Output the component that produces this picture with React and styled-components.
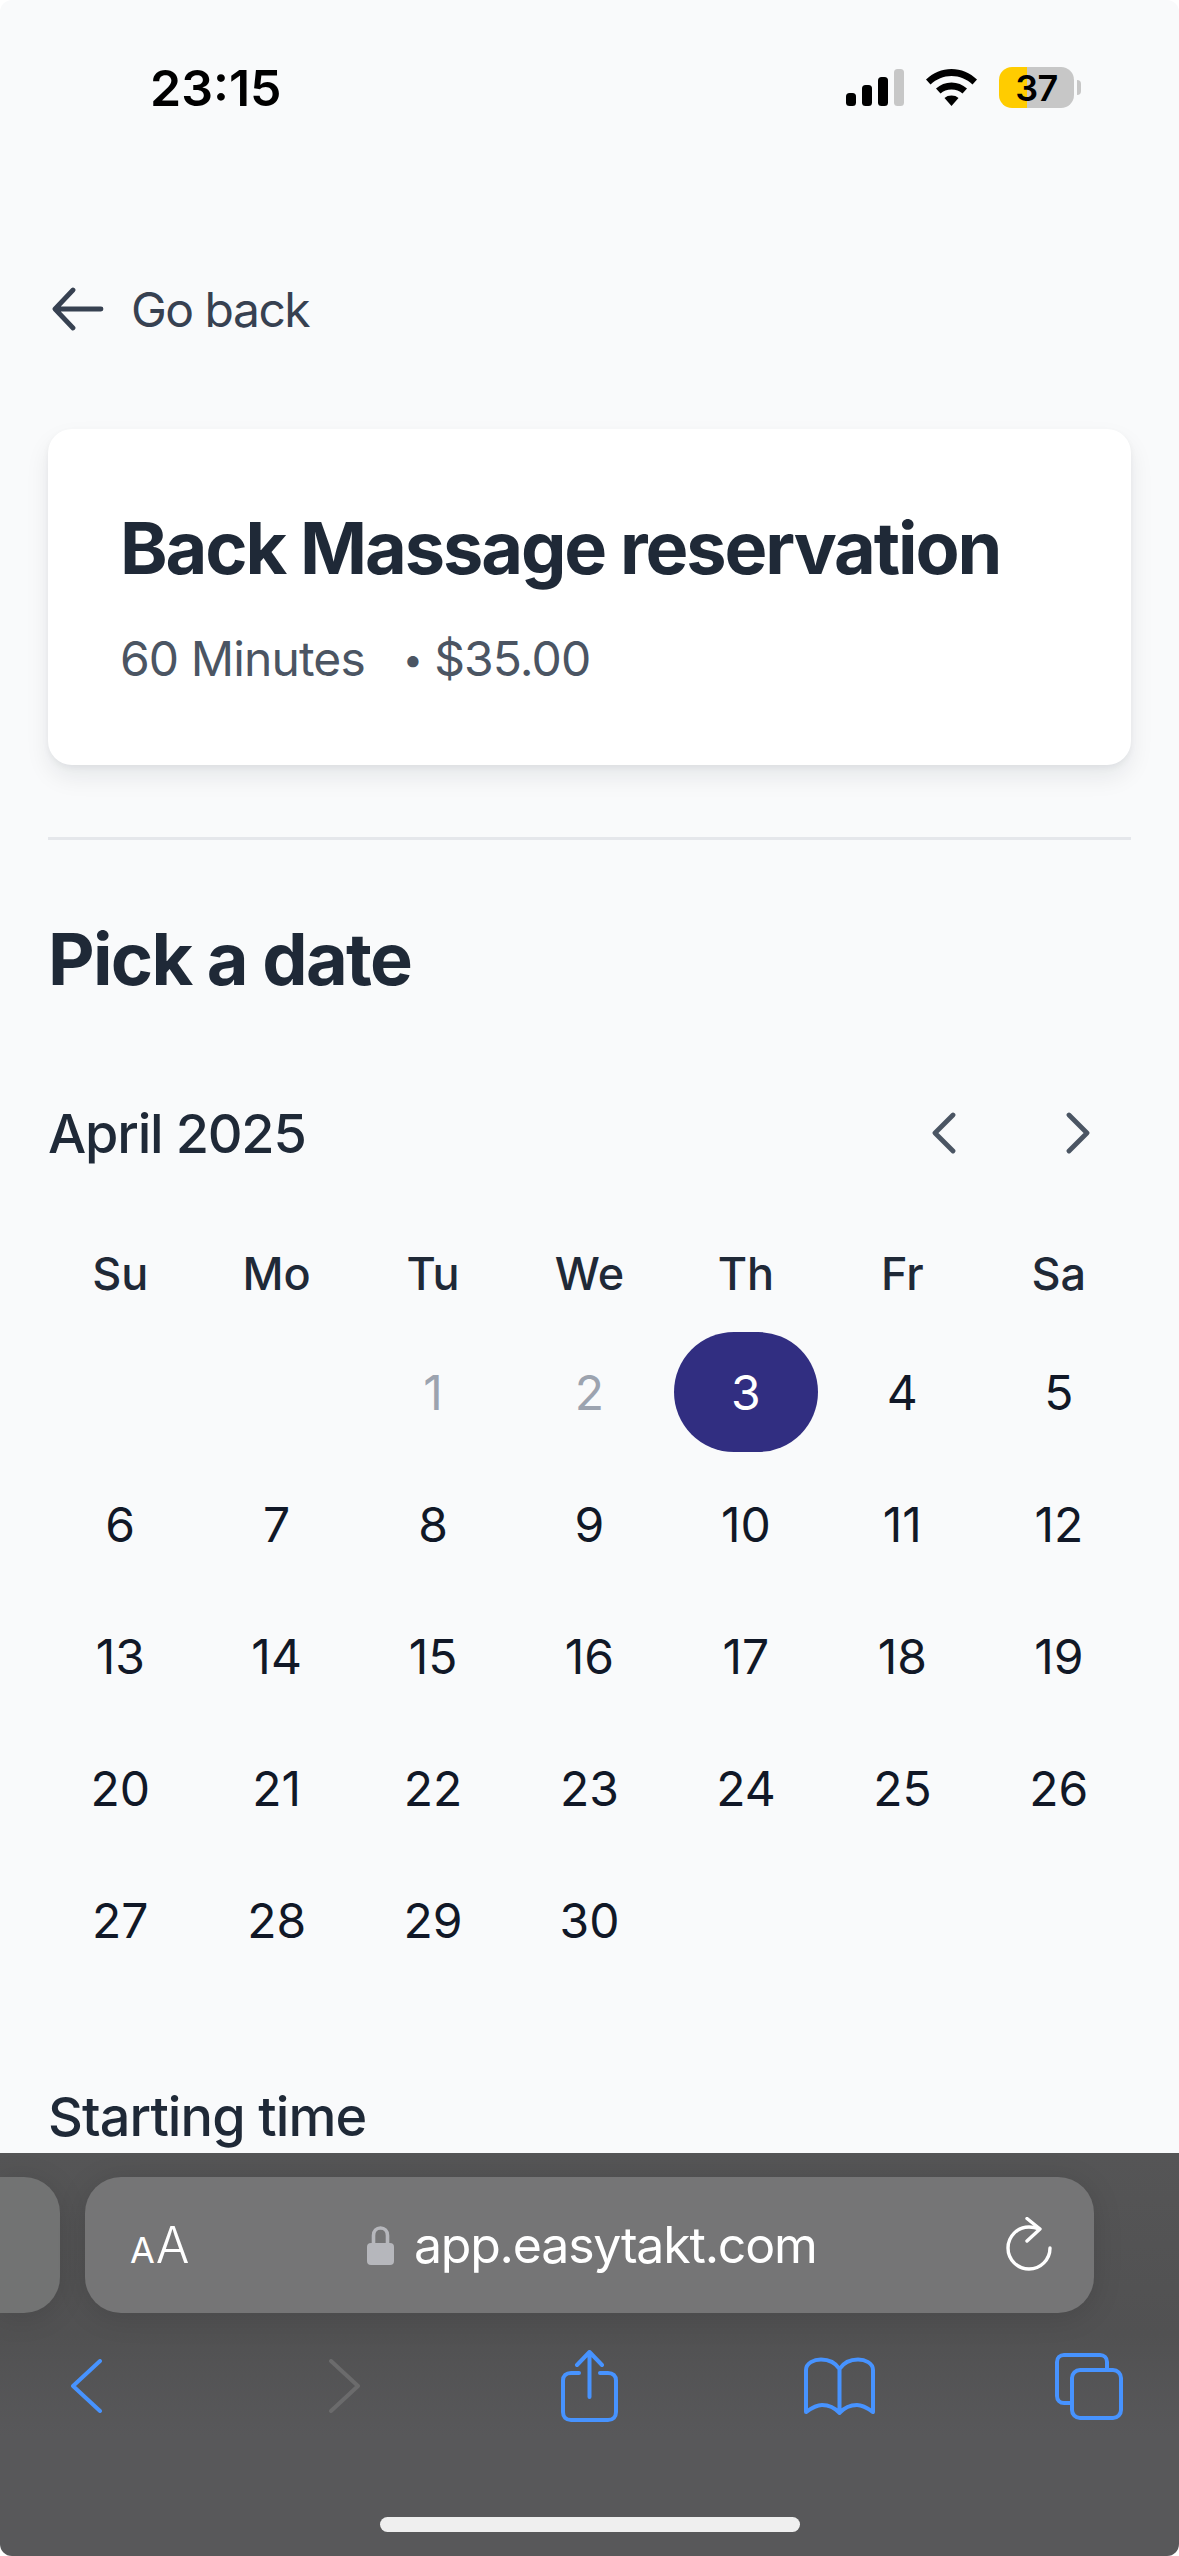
import styled, { createGlobalStyle } from 'styled-components';

const GlobalStyle = createGlobalStyle`
  * { box-sizing: border-box; }
  html, body { margin: 0; padding: 0; background: #fff; }
  body { font-family: 'Inter', 'Liberation Sans', sans-serif; }
`;

const WEEKDAYS = ['Su', 'Mo', 'Tu', 'We', 'Th', 'Fr', 'Sa'];
const LEADING_BLANKS = 2;
const DAYS = Array.from({ length: 30 }, (_, i) => i + 1);
const SELECTED = 3;
const PAST = [1, 2];

const ArrowLeftIcon = () => (
  <svg width="54" height="44" viewBox="0 0 54 44" fill="none" stroke="#374151" strokeWidth="4.8" strokeLinecap="round" strokeLinejoin="round">
    <path d="M21 3 3 22l18 19M4 22h45" />
  </svg>
);

const ChevronIcon = ({ dir }) => (
  <svg width="30" height="42" viewBox="0 0 30 42" fill="none" stroke="#4b5563" strokeWidth="4.8" strokeLinecap="round" strokeLinejoin="round">
    <path d={dir === 'left' ? 'M24 3 6 21l18 18' : 'M6 3l18 18L6 39'} />
  </svg>
);

const SignalIcon = () => (
  <svg width="58" height="37" viewBox="0 0 58 37">
    <rect x="0" y="24" width="10" height="13" rx="3.5" fill="#000" />
    <rect x="16" y="16" width="10" height="21" rx="3.5" fill="#000" />
    <rect x="32" y="8" width="10" height="29" rx="3.5" fill="#000" />
    <rect x="48" y="0" width="10" height="37" rx="3.5" fill="#c7c7c7" />
  </svg>
);

const WifiIcon = () => (
  <svg width="51" height="37" viewBox="0 0 51 37">
    <path d="M25.500 0C35 0 44 4 51 10.500L46.500 15.500C40.500 10 33.500 7 25.500 7S10.500 10 4.500 15.500L0 10.500C7 4 16 0 25.500 0Z" fill="#000" />
    <path d="M25.500 13.500C31.500 13.500 36.500 15.500 41 19.500L36.500 24.500C33.500 22 30 20.500 25.500 20.500S17.500 22 14.500 24.500L10 19.500C14.500 15.500 19.500 13.500 25.500 13.500Z" fill="#000" />
    <path d="M25.500 26.500C28.500 26.500 30.500 27.300 32.500 29L25.500 37 18.500 29C20.500 27.300 22.500 26.500 25.500 26.500Z" fill="#000" />
  </svg>
);

const LockIcon = () => (
  <svg width="27" height="39" viewBox="0 0 27 39" fill="none">
    <path d="M6.500 18V9.500C6.500 4.800 9.500 2 13.500 2S20.500 4.800 20.500 9.500V18" stroke="#b6b7bc" strokeWidth="3.600" />
    <rect x="0" y="17" width="27" height="22" rx="4" fill="#b6b7bc" />
  </svg>
);

const ReloadIcon = () => (
  <svg width="46" height="56" viewBox="0 0 46 56" fill="none" stroke="#fff" strokeWidth="3.400" strokeLinecap="round" strokeLinejoin="round">
    <path d="M33 12C30 10.600 26.500 10 23 10A21 21 0 1 0 44 31" />
    <path d="M21 1.500 34 12 21 24" />
  </svg>
);

const BackIcon = ({ disabled }) => (
  <svg width="31" height="54" viewBox="0 0 31 54" fill="none" stroke={disabled ? '#6b6b6c' : '#4793ff'} strokeWidth="4" strokeLinecap="round" strokeLinejoin="round">
    <path d={disabled ? 'M2 2l27 25L2 52' : 'M29 2 2 27l27 25'} />
  </svg>
);

const ShareIcon = () => (
  <svg width="57" height="72" viewBox="0 0 57 72" fill="none" stroke="#4793ff" strokeWidth="4" strokeLinecap="round" strokeLinejoin="round">
    <path d="M18 23H10C5 23 2 26 2 30.500V62C2 67 5 70 10 70H47C52 70 55 67 55 62V30.500C55 26 52 23 47 23H39" />
    <path d="M28.500 47V3M16 15 28.500 2 41 15" />
  </svg>
);

const BookIcon = () => (
  <svg width="71" height="59" viewBox="0 0 71 59" fill="none" stroke="#4793ff" strokeWidth="4" strokeLinecap="round" strokeLinejoin="round">
    <path d="M35.500 12C31 5 25 2.500 17 2.500 10 2.500 2 6 2 13V55C9 50 13 48 18 48 26 48 31 51 35.500 56 40 51 45 48 53 48 58 48 62 50 69 55V13C69 6 61 2.500 54 2.500 46 2.500 40 5 35.500 12ZM35.500 12V56" />
  </svg>
);

const TabsIcon = () => (
  <svg width="68" height="67" viewBox="0 0 68 67" fill="none" stroke="#4793ff" strokeWidth="4">
    <path d="M16 50H9C5 50 2 47 2 43V9C2 5 5 2 9 2H45C49 2 52 5 52 9V17" />
    <rect x="17" y="17" width="49" height="48" rx="8" />
  </svg>
);

const Page = styled.div`
  width: 1179px;
  height: 2556px;
  display: flex;
  flex-direction: column;
  overflow: hidden;
  background: #f9fafb;
  border-radius: 12px;
`;

const StatusBar = styled.div`
  height: 140px;
  flex: none;
  display: flex;
  align-items: flex-start;
  justify-content: space-between;
  padding: 58px 105px 0 150px;
`;

const Clock = styled.span`
  font-size: 50px;
  line-height: 60px;
  font-weight: 600;
  color: #000;
`;

const StatusIcons = styled.div`
  display: flex;
  align-items: center;
  gap: 22px;
  padding-top: 9px;
`;

const Battery = styled.div`
  position: relative;
  width: 75px;
  height: 41px;
  border-radius: 13px;
  display: flex;
  align-items: center;
  justify-content: center;
  background: linear-gradient(90deg, #ffcc00 0 28px, #c7c7c7 28px);
  font-size: 36px;
  font-weight: 600;
  letter-spacing: -0.5px;
  color: #000;

  &::after {
    content: '';
    position: absolute;
    right: -7px;
    top: 13px;
    width: 4px;
    height: 15px;
    border-radius: 0 8px 8px 0;
    background: #c7c7c7;
  }
`;

const Content = styled.main`
  flex: 1;
  min-height: 0;
  overflow: hidden;
  padding: 0 48px;
`;

const BackLink = styled.a`
  display: flex;
  align-items: center;
  gap: 25px;
  height: 62px;
  margin-top: 138px;
  padding-left: 4px;
  font-size: 48px;
  letter-spacing: -1.5px;
  color: #374151;
`;

const Card = styled.section`
  height: 336px;
  margin-top: 89px;
  padding: 79px 72px 0;
  background: #fff;
  border-radius: 24px;
  box-shadow: 0 12px 24px rgba(17, 24, 39, 0.08), 0 3px 6px rgba(17, 24, 39, 0.05);
`;

const Title = styled.h1`
  margin: 0;
  font-size: 72px;
  line-height: 80px;
  font-weight: 700;
  letter-spacing: -2.1px;
  color: #1f2937;
`;

const Meta = styled.div`
  display: flex;
  align-items: center;
  margin-top: 35px;
  font-size: 48px;
  line-height: 72px;
  letter-spacing: -0.9px;
  color: #4b5563;
`;

const MetaDot = styled.span`
  margin: 0 12px 0 38px;
  font-size: 36px;
`;

const Divider = styled.hr`
  height: 3px;
  margin: 72px 0 0;
  border: 0;
  background: #e5e7eb;
`;

const SectionTitle = styled.h2`
  margin: 74px 0 0;
  font-size: 72px;
  line-height: 90px;
  font-weight: 700;
  letter-spacing: -1.7px;
  color: #1f2937;
`;

const MonthBar = styled.div`
  display: flex;
  align-items: center;
  justify-content: space-between;
  height: 72px;
  margin-top: 93px;
`;

const MonthLabel = styled.span`
  font-size: 54px;
  font-weight: 500;
  letter-spacing: -1.2px;
  color: #1f2937;
`;

const MonthNav = styled.div`
  display: flex;
  gap: 104px;
  padding-right: 38px;
`;

const CalendarGrid = styled.div`
  display: grid;
  grid-template-columns: repeat(7, 1fr);
  gap: 12px;
  margin-top: 57px;
`;

const WeekdayCell = styled.div`
  height: 94px;
  display: flex;
  align-items: center;
  justify-content: center;
  font-size: 45px;
  font-weight: 500;
  color: #1f2937;
`;

const DayCell = styled.div`
  height: 120px;
  display: flex;
  align-items: center;
  justify-content: center;
  border-radius: 60px;
  font-size: 48px;
  color: ${(p) => (p.$selected ? '#fff' : p.$muted ? '#9ca3af' : '#111827')};
  background: ${(p) => (p.$selected ? '#312e81' : 'transparent')};
`;

const SubTitle = styled.h3`
  margin: 101px 0 0;
  font-size: 54px;
  line-height: 72px;
  font-weight: 500;
  letter-spacing: -0.9px;
  color: #1f2937;
`;

const BrowserChrome = styled.footer`
  flex: none;
  height: 403px;
  overflow: hidden;
  background: linear-gradient(180deg, #555556 0%, #515152 45%, #58585a 70%, #58585a 100%);
`;

const TabStrip = styled.div`
  display: flex;
  gap: 25px;
  height: 136px;
  margin-top: 24px;
`;

const PrevTab = styled.div`
  width: 60px;
  border-radius: 0 36px 36px 0;
  background: #727373;
  box-shadow: 0 4px 30px rgba(0, 0, 0, 0.12);
`;

const AddressBar = styled.div`
  width: 1009px;
  display: flex;
  align-items: center;
  justify-content: space-between;
  padding: 0 42px 0 45px;
  border-radius: 36px;
  background: #757576;
  box-shadow: 0 4px 30px rgba(0, 0, 0, 0.12);
  color: #fff;
`;

const FontSize = styled.span`
  font-size: 50px;
  font-weight: 300;
  line-height: 1;
  letter-spacing: -2px;

  & > small {
    font-size: 36px;
    font-weight: 400;
    margin-right: 3px;
  }
`;

const Url = styled.div`
  display: flex;
  align-items: center;
  gap: 20px;
  padding-right: 10px;
  font-size: 50px;
  letter-spacing: -1.2px;
`;

const ToolRow = styled.div`
  display: flex;
  align-items: center;
  height: 72px;
  margin-top: 37px;
  padding-left: 71px;
`;

const ToolButton = styled.div`
  display: flex;
  margin-left: ${(p) => p.$gap || 0}px;
`;

const HomeBar = styled.div`
  width: 420px;
  height: 15px;
  margin: 95px auto 0;
  border-radius: 8px;
  background: #efefef;
`;

const App = () => {
  return (
    <>
      <GlobalStyle />
      <Page>
        <StatusBar>
          <Clock>23:15</Clock>
          <StatusIcons>
            <SignalIcon />
            <WifiIcon />
            <Battery>37</Battery>
          </StatusIcons>
        </StatusBar>

        <Content>
          <BackLink>
            <ArrowLeftIcon />
            Go back
          </BackLink>

          <Card>
            <Title>Back Massage reservation</Title>
            <Meta>
              60 Minutes
              <MetaDot>•</MetaDot>
              $35.00
            </Meta>
          </Card>

          <Divider />

          <SectionTitle>Pick a date</SectionTitle>

          <MonthBar>
            <MonthLabel>April 2025</MonthLabel>
            <MonthNav>
              <ChevronIcon dir="left" />
              <ChevronIcon dir="right" />
            </MonthNav>
          </MonthBar>

          <CalendarGrid>
            {WEEKDAYS.map((d) => (
              <WeekdayCell key={d}>{d}</WeekdayCell>
            ))}
            {Array.from({ length: LEADING_BLANKS }, (_, i) => (
              <DayCell key={`blank-${i}`} />
            ))}
            {DAYS.map((d) => (
              <DayCell key={d} $selected={d === SELECTED} $muted={PAST.includes(d)}>
                {d}
              </DayCell>
            ))}
          </CalendarGrid>

          <SubTitle>Starting time</SubTitle>
        </Content>

        <BrowserChrome>
          <TabStrip>
            <PrevTab />
            <AddressBar>
              <FontSize>
                <small>A</small>A
              </FontSize>
              <Url>
                <LockIcon />
                app.easytakt.com
              </Url>
              <ReloadIcon />
            </AddressBar>
          </TabStrip>
          <ToolRow>
            <ToolButton><BackIcon /></ToolButton>
            <ToolButton $gap={227}><BackIcon disabled /></ToolButton>
            <ToolButton $gap={201}><ShareIcon /></ToolButton>
            <ToolButton $gap={186}><BookIcon /></ToolButton>
            <ToolButton $gap={180}><TabsIcon /></ToolButton>
          </ToolRow>
          <HomeBar />
        </BrowserChrome>
      </Page>
    </>
  );
};

export default App;
